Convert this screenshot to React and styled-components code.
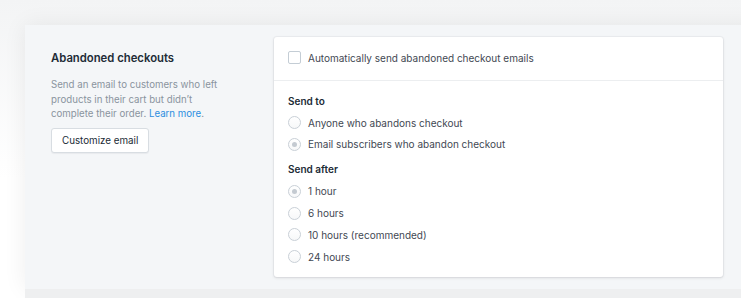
import React from "react";
import styled, { createGlobalStyle } from "styled-components";

const GlobalStyle = createGlobalStyle`
  html, body {
    margin: 0;
    padding: 0;
    background: #ffffff;
    font-family: Inter, "Noto Sans", "Liberation Sans", sans-serif;
    -webkit-font-smoothing: antialiased;
  }
`;

export default function App() {
  return (
    <>
      <GlobalStyle />
      <Stage>
        <Panel>
          <Intro>
            <Heading>Abandoned checkouts</Heading>
            <Description>
              Send an email to customers who left products in their cart but
              didn’t complete their order. <Link>Learn more</Link>.
            </Description>
            <Button>Customize email</Button>
          </Intro>
          <Card>
            <CardSection>
              <Option>
                <Checkbox />
                Automatically send abandoned checkout emails
              </Option>
            </CardSection>
            <CardSection bottom>
              <GroupTitle>Send to</GroupTitle>
              <Option>
                <Radio />
                Anyone who abandons checkout
              </Option>
              <Option>
                <Radio checked />
                Email subscribers who abandon checkout
              </Option>
              <GroupTitle spaced>Send after</GroupTitle>
              <Option>
                <Radio checked />1 hour
              </Option>
              <Option>
                <Radio />6 hours
              </Option>
              <Option>
                <Radio />
                10 hours (recommended)
              </Option>
              <Option>
                <Radio />
                24 hours
              </Option>
            </CardSection>
          </Card>
        </Panel>
        <Band />
      </Stage>
    </>
  );
}

const Stage = styled.div`
  width: 741px;
  height: 298px;
  overflow: hidden;
  padding: 25px 0 0 25px;
  box-sizing: border-box;
  background: linear-gradient(180deg, #f3f4f5 0%, #ffffff 60%);
  display: flex;
  flex-direction: column;
`;

const Panel = styled.div`
  width: 740px;
  height: 264px;
  box-sizing: border-box;
  background: #f4f6f8;
  box-shadow: 0 0 22px rgba(0, 0, 0, 0.07);
  display: flex;
  gap: 24px;
  padding: 12px 0 12px 26px;
`;

const Band = styled.div`
  flex: 1;
  width: 740px;
  background: #eeeff0;
`;

const Intro = styled.div`
  width: 199px;
  flex-shrink: 0;
  padding-top: 13px;
`;

const Heading = styled.h2`
  margin: 0 0 12px;
  font-size: 11.3px;
  font-weight: 600;
  color: #212b36;
  line-height: 16px;
`;

const Description = styled.p`
  width: 178px;
  margin: 0 0 6px;
  font-size: 9.7px;
  line-height: 14.5px;
  color: #8a949e;
`;

const Link = styled.span`
  color: #2c8ee0;
`;

const Button = styled.button`
  height: 25px;
  padding: 0 10px;
  background: #ffffff;
  border: 1px solid #d8dde2;
  border-radius: 3px;
  box-shadow: 0 1px 1px rgba(22, 29, 37, 0.05);
  font-family: inherit;
  font-size: 9.8px;
  color: #212b36;
`;

const Card = styled.div`
  width: 449px;
  flex-shrink: 0;
  background: #ffffff;
  border-radius: 3px;
  box-shadow: 0 0 0 1px rgba(63, 63, 68, 0.04), 0 1px 3px rgba(63, 63, 68, 0.15);
  display: flex;
  flex-direction: column;
`;

const CardSection = styled.div`
  padding: ${(p) => (p.bottom ? "10px 14px 0" : "10px 14px 11px")};
  border-top: ${(p) => (p.bottom ? "1px solid #eceef0" : "none")};
`;

const GroupTitle = styled.div`
  font-size: 10px;
  font-weight: 600;
  color: #212b36;
  line-height: 21px;
  margin-top: ${(p) => (p.spaced ? "4px" : "0")};
`;

const Option = styled.label`
  display: flex;
  align-items: center;
  gap: 7px;
  height: 21.8px;
  font-size: 10px;
  color: #3f4853;
`;

const Checkbox = styled.span`
  width: 11px;
  height: 11px;
  border: 1px solid #c4cdd5;
  border-radius: 2px;
  background: #fff;
`;

const Radio = styled.span`
  position: relative;
  width: 11px;
  height: 11px;
  border: 1px solid #c9d0d7;
  border-radius: 50%;
  background: linear-gradient(180deg, #ffffff, #f7f8f9);
  flex-shrink: 0;

  &::after {
    content: "";
    display: ${(p) => (p.checked ? "block" : "none")};
    position: absolute;
    left: 3px;
    top: 3px;
    width: 5px;
    height: 5px;
    border-radius: 50%;
    background: #c4cad1;
  }
`;
